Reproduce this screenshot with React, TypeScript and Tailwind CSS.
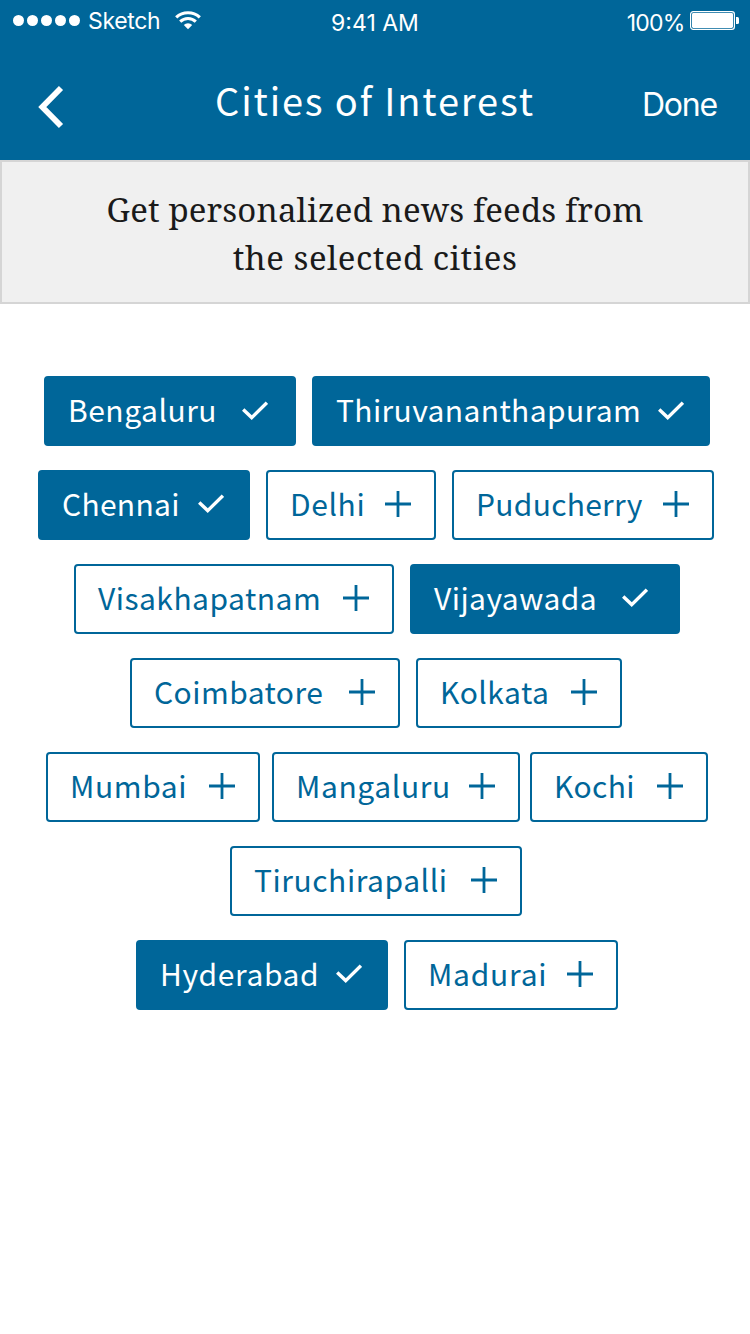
import React from 'react';

type City = {
  name: string;
  selected?: boolean;
  box: string;
  label: string;
  icon?: string;
};

type Row = { className: string; cities: City[] };

const rows: Row[] = [
  {
    className: 'pl-1 gap-4',
    cities: [
      { name: 'Bengaluru', selected: true, box: 'w-[252px] pl-[22px] pr-[26px]', label: 'tracking-[0.5px]', icon: '-mt-px' },
      { name: 'Thiruvananthapuram', selected: true, box: 'w-[398px] pl-[22px] pr-6', label: 'tracking-[0.38px]', icon: '-mt-px' },
    ],
  },
  {
    className: 'pl-0.5 gap-4',
    cities: [
      { name: 'Chennai', selected: true, box: 'w-[212px] pl-[22px] pr-6', label: 'tracking-[0.3px]', icon: '-mt-[3px]' },
      { name: 'Delhi', box: 'w-[170px] pl-[22px] pr-[23px]', label: 'tracking-[0.6px]' },
      { name: 'Puducherry', box: 'w-[262px] pl-[22px] pr-[23px]', label: 'tracking-[0.28px]' },
    ],
  },
  {
    className: 'pl-1 gap-4',
    cities: [
      { name: 'Visakhapatnam', box: 'w-[320px] pl-[22px] pr-[23px]', label: 'tracking-[0.48px]' },
      { name: 'Vijayawada', selected: true, box: 'w-[270px] pl-[22px] pr-[30px]', label: 'tracking-[0.45px]', icon: '-mt-[3px]' },
    ],
  },
  {
    className: 'pl-0.5 gap-4',
    cities: [
      { name: 'Coimbatore', box: 'w-[270px] pl-[22px] pr-[23px]', label: 'tracking-[0.45px]' },
      { name: 'Kolkata', box: 'w-[206px] pl-[22px] pr-[23px]', label: 'tracking-[0.5px]' },
    ],
  },
  {
    className: 'pl-1',
    cities: [
      { name: 'Mumbai', box: 'w-[214px] pl-[22px] pr-[23px]', label: 'tracking-[0.6px]' },
      { name: 'Mangaluru', box: 'ml-3 w-[248px] pl-[22px] pr-[23px]', label: 'tracking-[0.6px]' },
      { name: 'Kochi', box: 'ml-2.5 w-[178px] pl-[22px] pr-[23px]', label: 'tracking-[0.35px]' },
    ],
  },
  {
    className: 'pl-0.5',
    cities: [{ name: 'Tiruchirapalli', box: 'w-[292px] pl-[22px] pr-[23px]', label: 'tracking-[0.55px]' }],
  },
  {
    className: 'pl-1 gap-4',
    cities: [
      { name: 'Hyderabad', selected: true, box: 'w-[252px] pl-[22px] pr-6', label: 'tracking-[0.6px]', icon: '-mt-[3px]' },
      { name: 'Madurai', box: 'w-[214px] pl-[22px] pr-[23px]', label: 'tracking-[0.75px]' },
    ],
  },
];

function CheckIcon({ className }: { className: string }) {
  return (
    <svg className={`shrink-0 ${className}`} width="26" height="19" viewBox="0 0 26 19" fill="none">
      <path d="M1.2 8.6 L9.7 16.6 L24.9 1.6" stroke="currentColor" strokeWidth="3.4" />
    </svg>
  );
}

function PlusIcon() {
  return (
    <svg className="-mt-0.5 shrink-0" width="26" height="26" viewBox="0 0 26 26" fill="none">
      <path d="M13 0 V26 M0 13 H26" stroke="currentColor" strokeWidth="2.8" />
    </svg>
  );
}

function Chip({ city }: { city: City }) {
  const tone = city.selected ? 'bg-[#006699] text-white' : 'bg-white text-[#006699]';
  return (
    <button className={`flex h-[70px] items-center justify-between rounded border-2 border-[#006699] ${tone} ${city.box}`}>
      <span className={`whitespace-nowrap pb-1 font-['Noto_Sans_CJK_SC',sans-serif] text-[30px] leading-[44px] ${city.label}`}>
        {city.name}
      </span>
      {city.selected ? <CheckIcon className={city.icon ?? ''} /> : <PlusIcon />}
    </button>
  );
}

function StatusBar() {
  return (
    <div className="flex h-10 text-[23px] leading-[28px]">
      <div className="flex w-[250px] items-start pl-[12px]">
        <svg className="mt-[14px]" width="70" height="13" viewBox="0 0 70 13" fill="currentColor">
          {[6.5, 20.5, 34.5, 48.5, 62.5].map((x) => (
            <circle key={x} cx={x} cy="6.5" r="5.5" />
          ))}
        </svg>
        <span className="ml-[6px] mt-[7px] w-[87px] tracking-[-0.34px]">Sketch</span>
        <svg className="mt-[10px]" width="27" height="20" viewBox="0 0 27 20" fill="none" stroke="currentColor">
          <path d="M1.2 7.4 A17.3 17.3 0 0 1 24.8 7.4" strokeWidth="3.2" />
          <path d="M5.2 11.6 A11.2 11.2 0 0 1 20.8 11.6" strokeWidth="3" />
          <path d="M13 19.2 L8.8 15 A6 6 0 0 1 17.2 15 Z" fill="currentColor" stroke="none" />
        </svg>
      </div>
      <span className="mt-[9px] flex-1 text-center">9:41 AM</span>
      <div className="flex w-[250px] items-start justify-end pr-[10px]">
        <span className="mt-[9px] mr-[5.5px] tracking-[-0.79px]">100%</span>
        <svg className="mt-[11px]" width="50" height="19" viewBox="0 0 50 19" fill="none">
          <rect x="0.6" y="0.6" width="43.8" height="17.8" rx="2.6" stroke="currentColor" strokeWidth="1.2" />
          <rect x="2" y="2" width="41" height="15" rx="1.4" fill="currentColor" />
          <path d="M46 6 H47.5 Q49 6 49 7.5 V11.5 Q49 13 47.5 13 H46 Z" fill="currentColor" />
        </svg>
      </div>
    </div>
  );
}

export default function App() {
  return (
    <div className="flex h-[1334px] w-[750px] flex-col overflow-hidden bg-white font-['Inter',sans-serif]">
      <header className="h-40 bg-[#006699] text-white">
        <StatusBar />
        <nav className="flex h-[120px] items-start">
          <button className="w-[150px] pl-[37px] pt-[45px]" aria-label="Back">
            <svg width="28" height="44" viewBox="0 0 28 44" fill="none">
              <path d="M24 3 L5.3 22 L24 41" stroke="currentColor" strokeWidth="5.8" />
            </svg>
          </button>
          <h1 className="mt-8 flex-1 whitespace-nowrap text-center font-['Noto_Sans_CJK_SC',sans-serif] text-[38px] leading-[56px] tracking-[1.85px]">
            Cities of Interest
          </h1>
          <button className="mt-[45px] w-[150px] pr-[33px] text-right text-[32px] leading-10 tracking-[-1.2px]">Done</button>
        </nav>
      </header>

      <section className="h-36 border-2 border-[#d5d5d5] bg-[#f0f0f0] pt-[24px] text-center font-['Noto_Serif',serif] text-[33px] leading-[48px] text-[#1a1a1a]">
        <p className="tracking-[0.13px]">Get personalized news feeds from</p>
        <p className="tracking-[0.5px]">the selected cities</p>
      </section>

      <main className="flex flex-col gap-6 pt-[72px]">
        {rows.map((row, i) => (
          <div key={i} className={`flex justify-center ${row.className}`}>
            {row.cities.map((city) => (
              <Chip key={city.name} city={city} />
            ))}
          </div>
        ))}
      </main>
    </div>
  );
}
